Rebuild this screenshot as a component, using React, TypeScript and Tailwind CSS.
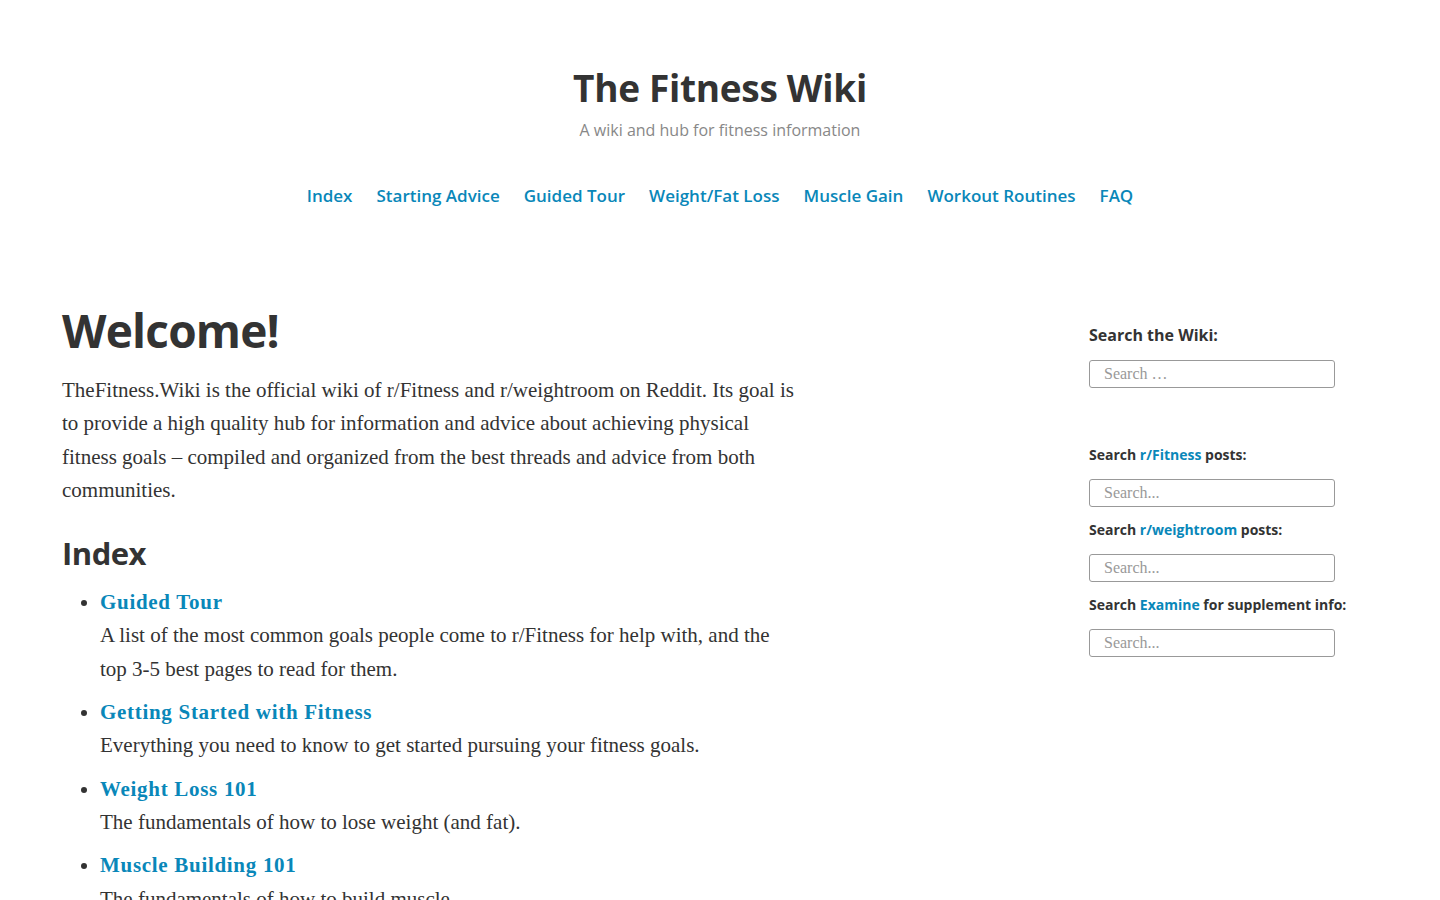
const sans = "font-['Open_Sans','Noto_Sans',sans-serif]";
const serif = "font-['Liberation_Serif','DejaVu_Serif',serif]";

const navLinks = [
  "Index",
  "Starting Advice",
  "Guided Tour",
  "Weight/Fat Loss",
  "Muscle Gain",
  "Workout Routines",
  "FAQ",
];

const indexItems = [
  {
    title: "Guided Tour",
    text: "A list of the most common goals people come to r/Fitness for help with, and the top 3-5 best pages to read for them.",
  },
  {
    title: "Getting Started with Fitness",
    text: "Everything you need to know to get started pursuing your fitness goals.",
  },
  {
    title: "Weight Loss 101",
    text: "The fundamentals of how to lose weight (and fat).",
  },
  {
    title: "Muscle Building 101",
    text: "The fundamentals of how to build muscle.",
  },
];

function SearchBox({ placeholder }: { placeholder: string }) {
  return (
    <input
      type="text"
      placeholder={placeholder}
      className={`${serif} block w-[246px] h-[28px] rounded-[3px] border border-[#999] px-[14px] text-[16px] text-[#333] placeholder:text-[#999] outline-none`}
    />
  );
}

export default function App() {
  return (
    <div className="min-h-screen bg-white text-[#333] overflow-hidden">
      {/* Header */}
      <header className="flex flex-col items-center pt-[64px]">
        <h1 className={`${sans} text-[37px] font-bold leading-[48px] tracking-[-0.3px] text-[#333]`}>
          The Fitness Wiki
        </h1>
        <p className={`${sans} mt-[7px] text-[16px] leading-[22px] text-[#888]`}>
          A wiki and hub for fitness information
        </p>
        <nav className="mt-[43px] flex gap-[24px]">
          {navLinks.map((l) => (
            <a
              key={l}
              href="#"
              className={`${sans} text-[17px] font-semibold leading-[24px] tracking-[0px] text-[#0987b9]`}
            >
              {l}
            </a>
          ))}
        </nav>
      </header>

      {/* Body */}
      <div className="mt-[94px] flex pl-[62px]">
        <main className="w-[736px]">
          <h2 className={`${sans} text-[46px] font-bold leading-[56px] tracking-[-0.8px] text-[#333]`}>
            Welcome!
          </h2>
          <p className={`${serif} mt-[16px] text-[21px] leading-[33.3px] text-[#333]`}>
            TheFitness.Wiki is the official wiki of r/Fitness and r/weightroom on Reddit. Its goal is
            to provide a high quality hub for information and advice about achieving physical
            fitness goals – compiled and organized from the best threads and advice from both
            communities.
          </p>
          <h3 className={`${sans} mt-[26px] text-[31px] font-bold leading-[40px] tracking-[-0.5px] text-[#333]`}>
            Index
          </h3>
          <ul className="mt-[13px] list-disc pl-[38px] marker:text-[#333]">
            {indexItems.map((it) => (
              <li key={it.title} className={`${serif} mb-[10px] text-[21px] leading-[33.3px]`}>
                <a href="#" className="font-bold tracking-[0.7px] text-[#0987b9]">
                  {it.title}
                </a>
                <p className="text-[#333]">{it.text}</p>
              </li>
            ))}
          </ul>
        </main>

        {/* Sidebar */}
        <aside className={`${sans} ml-[291px] w-[300px] pt-[21px]`}>
          <h4 className="text-[16px] font-bold leading-[24px] text-[#333]">Search the Wiki:</h4>
          <div className="mt-[13px]">
            <SearchBox placeholder="Search …" />
          </div>

          <h4 className="mt-[57px] whitespace-nowrap text-[14px] font-bold leading-[20px] text-[#333]">
            Search <a href="#" className="text-[#0987b9]">r/Fitness</a> posts:
          </h4>
          <div className="mt-[14px]">
            <SearchBox placeholder="Search..." />
          </div>

          <h4 className="mt-[13px] whitespace-nowrap text-[14px] font-bold leading-[20px] text-[#333]">
            Search <a href="#" className="text-[#0987b9]">r/weightroom</a> posts:
          </h4>
          <div className="mt-[14px]">
            <SearchBox placeholder="Search..." />
          </div>

          <h4 className="mt-[13px] whitespace-nowrap text-[14px] font-bold leading-[20px] text-[#333]">
            Search <a href="#" className="text-[#0987b9]">Examine</a> for supplement info:
          </h4>
          <div className="mt-[14px]">
            <SearchBox placeholder="Search..." />
          </div>
        </aside>
      </div>
    </div>
  );
}
